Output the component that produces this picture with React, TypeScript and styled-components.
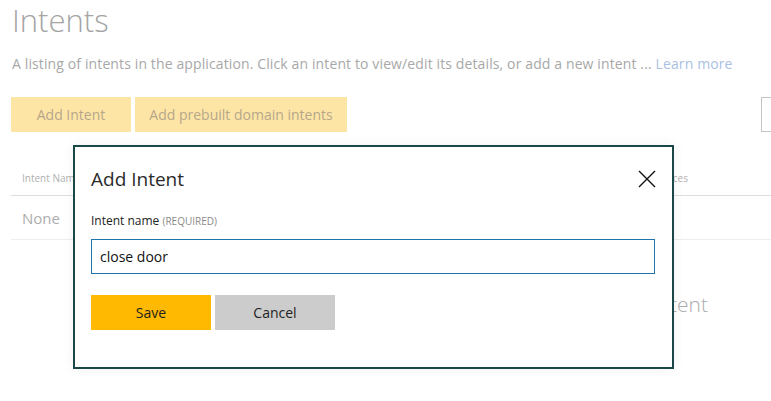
import React from "react";
import styled, { createGlobalStyle } from "styled-components";

const GlobalStyle = createGlobalStyle`
    body {
        margin: 0;
        background: #fff;
        font-family: "Open Sans", "Segoe UI", Arial, sans-serif;
        overflow: hidden;
    }
`;

const PageStylized = styled.div`
    position: relative;
    width: 771px;
    height: 401px;
    padding-left: 11px;
    box-sizing: border-box;
    overflow: hidden;
`;

const TitleStylized = styled.h1`
    margin: 0;
    padding-left: 1px;
    font-weight: 300;
    font-size: 31px;
    line-height: 40px;
    color: #a4a4a4;
`;

const SubtitleStylized = styled.p`
    margin: 4px 0 0 1px;
    font-size: 14px;
    letter-spacing: 0.12px;
    line-height: 40px;
    color: #a8a8a8;
    white-space: nowrap;
`;

const LinkStylized = styled.a`
    color: #a9c0e3;
    text-decoration: none;
`;

const ToolbarStylized = styled.div`
    display: flex;
    gap: 4px;
    margin-top: 13px;
    height: 35px;
`;

const FadedButton = styled.button<{ $width: number }>`
    width: ${(p) => p.$width}px;
    height: 35px;
    border: none;
    background: #fde5a6;
    color: #b7a78a;
    font-family: inherit;
    font-size: 14px;
    padding: 0;
`;

const SearchBoxStylized = styled.div`
    margin-left: auto;
    width: 30px;
    margin-right: -20px;
    height: 35px;
    box-sizing: border-box;
    border: 1px solid #c4c4c4;
`;

const TableStylized = styled.div`
    margin-top: 28px;
    width: 760px;
`;

const HeaderRowStylized = styled.div`
    display: flex;
    justify-content: space-between;
    height: 35px;
    align-items: center;
    border-bottom: 1px solid #dedede;
    padding: 0 11px;
    font-size: 10px;
    color: #b0b0b0;
`;

const HeaderCellStylized = styled.span<{ $right?: boolean }>`
    margin-right: ${(p) => (p.$right ? "72px" : "0")};
`;

const RowStylized = styled.div`
    height: 43px;
    display: flex;
    align-items: center;
    border-bottom: 1px solid #eeeeee;
    padding: 0 11px;
    font-size: 15px;
    color: #adadad;
`;

const EmptyStylized = styled.div`
    margin-top: 50px;
    padding-right: 63px;
    text-align: right;
    font-size: 21px;
    font-weight: 300;
    color: #acacac;
`;

const ModalStylized = styled.div`
    position: absolute;
    left: 73px;
    top: 145px;
    width: 601px;
    height: 224px;
    box-sizing: border-box;
    border: 2px solid #1a4848;
    background: #fff;
    padding: 14px 16px 0 16px;
    box-shadow: 0 0 12px rgba(0, 0, 0, 0.06);
`;

const ModalHeaderStylized = styled.div`
    display: flex;
    align-items: center;
    justify-content: space-between;
    height: 36px;
`;

const ModalTitleStylized = styled.h2`
    margin: 0;
    font-weight: 400;
    font-size: 19px;
    color: #2b2b2b;
`;

const CloseButtonStylized = styled.button`
    width: 20px;
    height: 20px;
    padding: 0;
    margin-right: -1px;
    border: none;
    background: transparent;
    display: flex;
    align-items: center;
    justify-content: center;
`;

const LabelStylized = styled.label`
    display: block;
    margin-top: 16px;
    font-size: 12px;
    line-height: 16px;
    color: #222;
`;

const RequiredStylized = styled.span`
    font-size: 10px;
    color: #8a8a8a;
`;

const InputStylized = styled.input`
    display: block;
    margin-top: 10px;
    width: 564px;
    height: 35px;
    box-sizing: border-box;
    border: 1px solid #1f74ad;
    padding: 0 8px;
    font-family: inherit;
    font-size: 14px;
    color: #111;
    outline: none;
    caret-color: #111;
`;

const ActionsStylized = styled.div`
    display: flex;
    gap: 4px;
    margin-top: 21px;
`;

const ActionButton = styled.button<{ $primary?: boolean }>`
    width: 120px;
    height: 35px;
    border: none;
    padding: 0;
    background: ${(p) => (p.$primary ? "#ffb900" : "#cccccc")};
    color: #222;
    font-family: inherit;
    font-size: 14px;
`;

export default function App() {
    return (
        <>
            <GlobalStyle />
            <PageStylized>
                <TitleStylized>Intents</TitleStylized>
                <SubtitleStylized>
                    A listing of intents in the application. Click an intent to view/edit its details, or add a new intent ...{" "}
                    <LinkStylized href="#">Learn more</LinkStylized>
                </SubtitleStylized>
                <ToolbarStylized>
                    <FadedButton $width={120}>Add Intent</FadedButton>
                    <FadedButton $width={212}>Add prebuilt domain intents</FadedButton>
                    <SearchBoxStylized />
                </ToolbarStylized>
                <TableStylized>
                    <HeaderRowStylized>
                        <HeaderCellStylized>Intent Name</HeaderCellStylized>
                        <HeaderCellStylized $right>Utterances</HeaderCellStylized>
                    </HeaderRowStylized>
                    <RowStylized>None</RowStylized>
                </TableStylized>
                <EmptyStylized>Add a new intent</EmptyStylized>

                <ModalStylized>
                    <ModalHeaderStylized>
                        <ModalTitleStylized>Add Intent</ModalTitleStylized>
                        <CloseButtonStylized aria-label="Close">
                            <svg width="18" height="18" viewBox="0 0 18 18">
                                <path d="M1 1 L17 17 M17 1 L1 17" stroke="#111" strokeWidth="1.4" />
                            </svg>
                        </CloseButtonStylized>
                    </ModalHeaderStylized>
                    <LabelStylized>
                        Intent name <RequiredStylized>(REQUIRED)</RequiredStylized>
                    </LabelStylized>
                    <InputStylized defaultValue="close door" autoFocus />
                    <ActionsStylized>
                        <ActionButton $primary>Save</ActionButton>
                        <ActionButton>Cancel</ActionButton>
                    </ActionsStylized>
                </ModalStylized>
            </PageStylized>
        </>
    );
}
